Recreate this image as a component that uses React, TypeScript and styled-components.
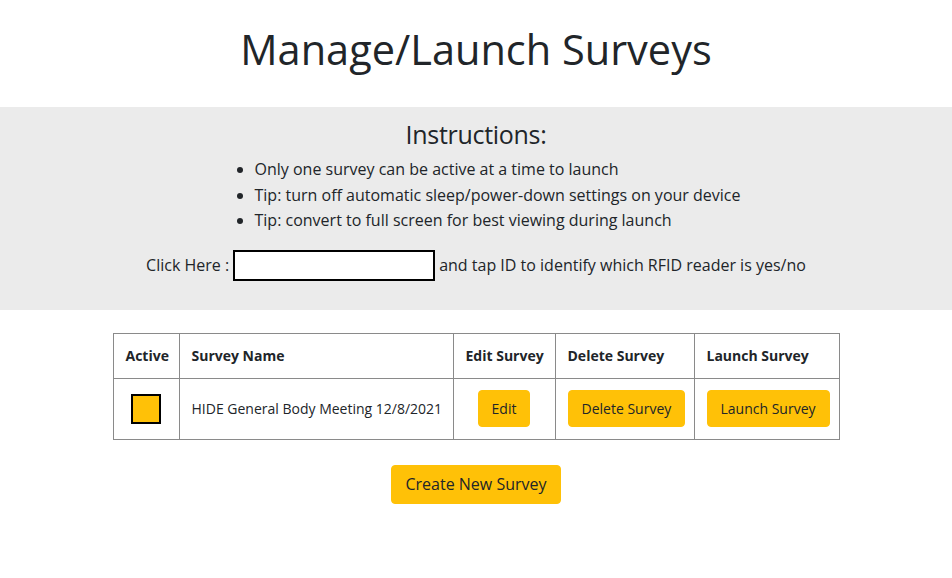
import React from "react";
import styled, { createGlobalStyle } from "styled-components";

const Global = createGlobalStyle`
  body {
    margin: 0;
    background: #ffffff;
    font-family: "Open Sans", "Noto Sans", sans-serif;
    color: #212529;
  }
`;

const Page = styled.div`
  display: flex;
  flex-direction: column;
  align-items: stretch;
`;

const Title = styled.h1`
  margin: 24px 0 33px;
  text-align: center;
  font-size: 41.5px;
  font-weight: 500;
  line-height: 50px;
`;

const Band = styled.section`
  background: #ebebeb;
  padding: 10px 0 29px;
  display: flex;
  flex-direction: column;
  align-items: center;
`;

const Heading = styled.h3`
  margin: 0 0 6px;
  font-size: 25px;
  font-weight: 500;
  line-height: 34px;
  letter-spacing: -0.3px;
`;

const List = styled.ul`
  margin: 0;
  padding-left: 43px;
  align-self: center;
  font-size: 16px;
  line-height: 25.5px;
`;

const ClickRow = styled.div`
  margin-top: 16px;
  display: flex;
  align-items: center;
  gap: 4px;
  font-size: 16px;
`;

const IdInput = styled.input`
  width: 202px;
  height: 31px;
  box-sizing: border-box;
  border: 2px solid #000;
  background: #fff;
  padding: 0 4px;
  outline: none;
`;

const Table = styled.table`
  margin: 23px auto 0;
  width: 726px;
  table-layout: fixed;
  border-collapse: collapse;
  font-size: 14px;
`;

const Th = styled.th<{ $w: number; $align?: string }>`
  box-sizing: border-box;
  width: ${(p) => p.$w}px;
  height: 45px;
  border: 1px solid #8a8a8a;
  padding: 0 12px;
  text-align: ${(p) => p.$align || "left"};
  font-weight: 700;
  font-size: 14px;
  white-space: nowrap;
  overflow: hidden;
`;

const Td = styled.td<{ $align?: string }>`
  height: 60px;
  border: 1px solid #8a8a8a;
  padding: 0 12px;
  text-align: ${(p) => p.$align || "left"};
  vertical-align: middle;
  white-space: nowrap;
`;

const Check = styled.div`
  width: 30px;
  height: 30px;
  box-sizing: border-box;
  border: 2px solid #000;
  background: #ffc107;
  margin: 0 auto;
`;

const Button = styled.button<{ $big?: boolean }>`
  background: #ffc107;
  border: 1px solid #ffc107;
  border-radius: 4px;
  color: #212529;
  font-family: inherit;
  font-size: ${(p) => (p.$big ? "16px" : "14px")};
  height: ${(p) => (p.$big ? "39px" : "37px")};
  padding: 0 13px;
  white-space: nowrap;
  cursor: pointer;
`;

const Footer = styled.div`
  display: flex;
  justify-content: center;
  margin-top: 25px;
`;

export default function App() {
  return (
    <Page>
      <Global />
      <Title>Manage/Launch Surveys</Title>
      <Band>
        <Heading>Instructions:</Heading>
        <List>
          <li>Only one survey can be active at a time to launch</li>
          <li>Tip: turn off automatic sleep/power-down settings on your device</li>
          <li>Tip: convert to full screen for best viewing during launch</li>
        </List>
        <ClickRow>
          <span>Click Here :</span>
          <IdInput type="text" />
          <span>and tap ID to identify which RFID reader is yes/no</span>
        </ClickRow>
      </Band>
      <Table>
        <thead>
          <tr>
            <Th $w={66} $align="center">Active</Th>
            <Th $w={274}>Survey Name</Th>
            <Th $w={102} $align="center">Edit Survey</Th>
            <Th $w={139}>Delete Survey</Th>
            <Th $w={145}>Launch Survey</Th>
          </tr>
        </thead>
        <tbody>
          <tr>
            <Td $align="center">
              <Check />
            </Td>
            <Td>HIDE General Body Meeting 12/8/2021</Td>
            <Td $align="center">
              <Button>Edit</Button>
            </Td>
            <Td $align="center">
              <Button>Delete Survey</Button>
            </Td>
            <Td $align="center">
              <Button>Launch Survey</Button>
            </Td>
          </tr>
        </tbody>
      </Table>
      <Footer>
        <Button $big>Create New Survey</Button>
      </Footer>
    </Page>
  );
}
